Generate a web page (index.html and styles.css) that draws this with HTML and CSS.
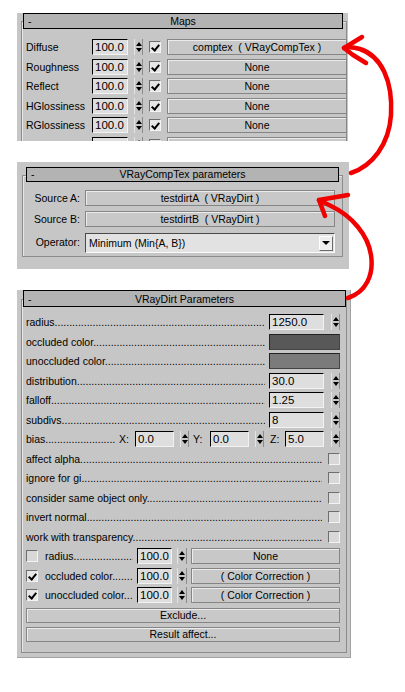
FILE: index.html
```html
<!DOCTYPE html>
<html>
<head>
<meta charset="utf-8">
<title>VRayCompTex / VRayDirt setup</title>
<link rel="stylesheet" href="styles.css">
</head>
<body>
<div class="sheet">

<!-- material maps rollout (cut off at the bottom) -->
<div class="panel p-maps">
  <div class="roll">
    <div class="head"><span class="minus">-</span><span>Maps</span><span></span></div>
    <div class="maps">
      <span class="lbl">Diffuse</span><span class="num">100.0</span><span class="spin"></span><span class="cb on"></span><span class="btn">comptex &nbsp;( VRayCompTex )</span>
      <span class="lbl">Roughness</span><span class="num">100.0</span><span class="spin"></span><span class="cb on"></span><span class="btn">None</span>
      <span class="lbl">Reflect</span><span class="num">100.0</span><span class="spin"></span><span class="cb on"></span><span class="btn">None</span>
      <span class="lbl">HGlossiness</span><span class="num">100.0</span><span class="spin"></span><span class="cb on"></span><span class="btn">None</span>
      <span class="lbl">RGlossiness</span><span class="num">100.0</span><span class="spin"></span><span class="cb on"></span><span class="btn">None</span>
      <span class="lbl">Fresnel IOR</span><span class="num">100.0</span><span class="spin"></span><span class="cb on"></span><span class="btn">None</span>
    </div>
  </div>
</div>

<!-- comp tex rollout -->
<div class="panel p-comp">
  <div class="roll">
    <div class="head"><span class="minus">-</span><span>VRayCompTex parameters</span><span></span></div>
    <div class="comp">
      <span class="clbl">Source A:</span><span class="btn">testdirtA &nbsp;( VRayDirt )</span>
      <span class="clbl">Source B:</span><span class="btn">testdirtB &nbsp;( VRayDirt )</span>
      <span class="clbl">Operator:</span>
      <span class="drop">Minimum (Min{A, B})<span class="drop-btn"></span></span>
    </div>
  </div>
</div>

<!-- dirt rollout -->
<div class="panel p-dirt">
  <div class="roll">
    <div class="head"><span class="minus">-</span><span>VRayDirt Parameters</span><span></span></div>
    <div class="dirt">
      <div class="row"><span class="lead">radius</span><span class="num wide">1250.0</span><span class="spin gap7"></span></div>
      <div class="row"><span class="lead">occluded color</span><span class="swatch dark"></span></div>
      <div class="row"><span class="lead">unoccluded color</span><span class="swatch mid"></span></div>
      <div class="row"><span class="lead">distribution</span><span class="num wide">30.0</span><span class="spin gap7"></span></div>
      <div class="row"><span class="lead">falloff</span><span class="num wide">1.25</span><span class="spin gap7"></span></div>
      <div class="row"><span class="lead">subdivs</span><span class="num wide">8</span><span class="spin gap7"></span></div>
      <div class="row">
        <span class="lead bias">bias</span>
        <span class="axis">X:</span><span class="num xyz">0.0</span><span class="spin gap6"></span>
        <span class="axis ay">Y:</span><span class="num xyz">0.0</span><span class="spin gap6"></span>
        <span class="axis az">Z:</span><span class="num xyz">5.0</span><span class="spin gap7"></span>
      </div>
      <div class="row"><span class="lead chk">affect alpha</span><span class="cb"></span></div>
      <div class="row"><span class="lead chk">ignore for gi</span><span class="cb"></span></div>
      <div class="row"><span class="lead chk">consider same object only</span><span class="cb"></span></div>
      <div class="row"><span class="lead chk">invert normal</span><span class="cb"></span></div>
      <div class="row"><span class="lead chk">work with transparency</span><span class="cb"></span></div>
      <div class="row"><span class="cb"></span><span class="lead sub">radius</span><span class="num small">100.0</span><span class="spin gap5"></span><span class="btn sbtn">None</span></div>
      <div class="row"><span class="cb on"></span><span class="lead sub">occluded color</span><span class="num small">100.0</span><span class="spin gap5"></span><span class="btn sbtn">( Color Correction )</span></div>
      <div class="row"><span class="cb on"></span><span class="lead sub">unoccluded color</span><span class="num small">100.0</span><span class="spin gap5"></span><span class="btn sbtn">( Color Correction )</span></div>
      <div class="row"><span class="btn full">Exclude...</span></div>
      <div class="row"><span class="btn full">Result affect...</span></div>
    </div>
  </div>
</div>

<svg class="arrows" width="405" height="692" viewBox="0 0 405 692">
  <g fill="none" stroke="#f20000" stroke-width="4.5" stroke-linecap="round" stroke-linejoin="round">
    <path d="M351 173 C372 166 389 145 391 115 C393 80 381 56 360 49 C353 47 348 47 344 48"/>
    <path d="M362 37 L344 48 L353 55 L366 63"/>
    <path d="M348 298 C366 292 374 275 371 255 C368 235 352 216 331 206 L319 200"/>
    <path d="M348 195 L319 200 L325 216"/>
  </g>
</svg>

</div>
</body>
</html>
```
FILE: styles.css
```css
* { box-sizing: border-box; }
body { margin: 0; background: #fff; font-family: "Liberation Sans", Arial, sans-serif; font-size: 10.5px; color: #000; }

.sheet { position: relative; width: 405px; height: 692px; overflow: hidden; padding-top: 13px; }

/* rollout panels */
.panel { background: #c6c6c6; margin-left: 17px; display: flow-root; }
.p-maps { width: 331px; height: 128px; overflow: hidden; padding: 0 1px 0 4px; }
.p-comp { width: 332px; height: 107px; margin-top: 21px; padding: 5px 6px 0 5px; }
.p-dirt { width: 334px; height: 368px; margin-top: 21px; padding: 0 3px 0 4px; border-right: 1px solid #a2a2a2; border-bottom: 1px solid #a2a2a2; }

.roll { border: 1px solid #8c8c8c; box-shadow: inset 1px 1px 0 #e6e6e6; margin-top: 8px; }
.p-maps .roll { height: 200px; }
.p-comp .roll { padding-bottom: 4px; }
.p-dirt .roll { margin-top: 9px; padding-bottom: 10px; }

.head { height: 16px; border: 1px solid #000; background: #b3b3b3; display: grid; grid-template-columns: 20px 1fr 20px; align-items: center; text-align: center; line-height: 14px; }
.head .minus { text-align: left; padding-left: 4px; }
.p-maps .head { margin: -9px 3px 0 1px; }
.p-comp .head { height: 15px; margin: -9px 3px 0 3px; line-height: 13px; }
.p-dirt .head { height: 17px; margin: -10px 0 0 1px; }

/* controls */
.num { height: 16px; background: #dedede; border: 1px solid; border-color: #000 #f2f2f2 #f2f2f2 #000; font-size: 11.5px; line-height: 14px; padding-left: 2px; white-space: nowrap; overflow: hidden; }

.spin { width: 9px; height: 16px; display: flex; flex-direction: column; align-items: center; justify-content: center; gap: 2px; border-left: 1px solid #e4e4e4; border-right: 1px solid #8c8c8c; flex: none; }
.spin::before { content: ""; border-left: 3px solid transparent; border-right: 3px solid transparent; border-bottom: 4px solid #000; }
.spin::after { content: ""; border-left: 3px solid transparent; border-right: 3px solid transparent; border-top: 4px solid #000; }

.cb { width: 12px; height: 12px; background: #d8d8d8; border: 1px solid; border-color: #6e6e6e #f4f4f4 #f4f4f4 #6e6e6e; display: flex; justify-content: center; flex: none; }
.cb.on { background: #e6e6e6; }
.cb.on::after { content: ""; width: 3px; height: 6px; margin-top: 1px; border: solid #000; border-width: 0 2px 2px 0; transform: rotate(40deg); }

.btn { height: 16px; background: #c8c8c8; border: 1px solid #858585; box-shadow: inset 1px 1px 0 #ececec; text-align: center; line-height: 14px; white-space: nowrap; overflow: hidden; }

/* maps rows */
.maps { margin-top: 10px; padding-left: 4px; display: grid; grid-template-columns: 60px 36px 9px 12px 180px; column-gap: 6px; grid-auto-rows: 16px; row-gap: 3.5px; align-items: center; }
.maps .lbl { white-space: nowrap; overflow: hidden; }

/* comp rows */
.comp { margin-top: 8px; padding-left: 4px; display: grid; grid-template-columns: 53px 250px; column-gap: 5px; grid-template-rows: 16px 16px 20px; row-gap: 5px; align-items: center; }
.comp .clbl { text-align: right; white-space: nowrap; }
.comp .drop { margin-top: 2px; }
.drop { height: 20px; background: #e2e2e2; border: 1px solid; border-color: #4a4a4a #fafafa #fafafa #4a4a4a; display: flex; align-items: center; padding: 0 1px 0 3px; white-space: nowrap; }
.drop-btn { margin-left: auto; width: 14px; height: 15px; background: #eeeeee; border: 1px solid; border-color: #fff #6c6c6c #6c6c6c #fff; display: flex; align-items: center; justify-content: center; }
.drop-btn::after { content: ""; border-left: 4px solid transparent; border-right: 4px solid transparent; border-top: 4px solid #000; }

/* dirt rows */
.dirt { margin-top: 7px; padding: 0 6px 0 4px; display: grid; grid-template-columns: minmax(0, 1fr); grid-auto-rows: 16px; row-gap: 3.5px; }
.row { display: flex; align-items: center; min-width: 0; }
.lead { flex: 1; min-width: 0; overflow: hidden; white-space: nowrap; margin-right: 4px; }
.lead::after { content: "........................................................................................................................"; }
.lead.chk { margin-right: 6px; }
.lead.bias { flex: none; width: 90px; margin-right: 0; }
.lead.sub { flex: none; width: 88px; margin: 0 4px 0 7px; }

.num.wide { width: 55px; flex: none; }
.num.xyz { width: 39px; flex: none; }
.num.small { width: 35px; flex: none; }
.gap5 { margin-left: 5px; }
.gap6 { margin-left: 6px; }
.gap7 { margin-left: 7px; }
.row .spin.gap5 { width: 10px; }

.axis { width: 19px; padding-left: 3px; flex: none; }
.axis.ay { width: 21px; padding-left: 4px; }
.axis.az { width: 21px; padding-left: 6px; }

.swatch { width: 71px; height: 16px; border: 1px solid; border-color: #222 #444 #444 #222; flex: none; }
.swatch.dark { background: #585858; }
.swatch.mid { background: #7b7b7b; }

.sbtn { flex: 1; min-width: 0; margin-left: 4px; }
.btn.full { flex: 1; height: 15px; line-height: 13px; }
.row:nth-last-child(2) { margin-top: 1.5px; }

.arrows { position: absolute; left: 0; top: 0; pointer-events: none; }
```
